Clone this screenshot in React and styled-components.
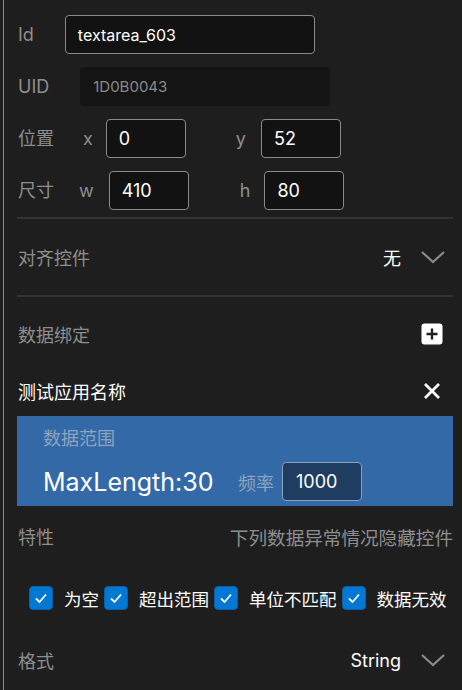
import styled, { createGlobalStyle } from "styled-components";

const GlobalStyle = createGlobalStyle`
  html, body {
    margin: 0;
    padding: 0;
    background: #1e1e1e;
  }
  body {
    font-family: "Inter", "Noto Sans CJK SC", sans-serif;
  }
`;

const Panel = styled.div`
  position: relative;
  width: 459px;
  height: 690px;
  box-sizing: border-box;
  margin-left: 3px;
  padding: 15px 9px 0 13px;
  background: #1e1e1e;
  border-left: 1px solid #8a8a8a;
  overflow: hidden;
`;

const FieldRow = styled.div`
  display: flex;
  align-items: center;
  height: 39px;
  margin-bottom: 13px;
`;

const Label = styled.span`
  color: #8e8e8e;
  font-size: 18px;
  line-height: 24px;
  margin-left: 1px;
  margin-right: ${(p) => p.$gap || 0}px;
`;

const Axis = styled.span`
  color: #8e8e8e;
  font-size: 18px;
  margin-left: ${(p) => p.$left || 0}px;
  margin-right: ${(p) => p.$right || 0}px;
`;

const TextBox = styled.div`
  box-sizing: border-box;
  width: ${(p) => p.$width}px;
  height: 39px;
  display: flex;
  align-items: center;
  padding-left: 12px;
  border-radius: 4px;
  border: 1px solid ${(p) => (p.$readOnly ? "transparent" : "#8a8a8a")};
  background: ${(p) => (p.$readOnly ? "#141414" : "#121212")};
  color: ${(p) => (p.$readOnly ? "#8a8a8a" : "#ffffff")};
  font-size: ${(p) => p.$size || 18}px;
`;

const Divider = styled.div`
  height: 2px;
  background: #333333;
  margin-top: ${(p) => p.$top || 0}px;
`;

const SectionRow = styled.div`
  display: flex;
  align-items: center;
  justify-content: space-between;
  height: ${(p) => p.$height}px;
`;

const SectionTitle = styled.span`
  color: ${(p) => (p.$bright ? "#ffffff" : "#8e8e8e")};
  font-size: 18px;
  margin-left: 1px;
`;

const RightGroup = styled.div`
  display: flex;
  align-items: center;
  gap: 19px;
  color: #ffffff;
  font-size: 18px;
`;

const Hint = styled.span`
  color: #8e8e8e;
  font-size: 18.6px;
`;

const IconSlot = styled.div`
  display: flex;
  align-items: center;
  justify-content: center;
  width: 26px;
  margin-right: ${(p) => p.$right || 0}px;
`;

const BindPanel = styled.div`
  background: #3469a8;
  margin-top: 5px;
  height: 90px;
  box-sizing: border-box;
  padding: 11px 0 0 26px;
`;

const BindLabel = styled.div`
  color: #8ea3bd;
  font-size: 18px;
  line-height: 24px;
`;

const BindRow = styled.div`
  display: flex;
  align-items: center;
  margin-top: 11px;
  height: 39px;
`;

const BigValue = styled.span`
  color: #ffffff;
  font-size: 25px;
  width: 195px;
`;

const FreqLabel = styled.span`
  color: #8ea3bd;
  font-size: 18px;
  margin-right: 8px;
`;

const FreqBox = styled.div`
  box-sizing: border-box;
  width: 80px;
  height: 39px;
  display: flex;
  align-items: center;
  padding-left: 13px;
  border-radius: 4px;
  background: #1f3c61;
  border: 1px solid #8aa0bb;
  color: #ffffff;
  font-size: 18px;
`;

const CheckRow = styled.div`
  display: flex;
  align-items: center;
  height: 64px;
  padding-left: 12px;
`;

const CheckItem = styled.label`
  display: flex;
  align-items: center;
  flex-shrink: 0;
  white-space: nowrap;
  color: #ffffff;
  font-size: 17.5px;
  margin-right: 5px;
`;

const Box = styled.span`
  box-sizing: border-box;
  width: 24px;
  height: 24px;
  border-radius: 4px;
  background: #0078d4;
  border: 1px solid #0a5fa6;
  display: flex;
  align-items: center;
  justify-content: center;
  margin-right: 11px;
`;

const Chevron = () => (
  <svg width="26" height="16" viewBox="0 0 26 16">
    <path d="M2 3 L13 13 L24 3" fill="none" stroke="#8a8a8a" strokeWidth="2.2" />
  </svg>
);

const PlusBox = () => (
  <svg width="22" height="22" viewBox="0 0 22 22">
    <rect x="0.5" y="0.5" width="21" height="21" rx="3" fill="#ffffff" />
    <path d="M11 5.5 V16.5 M5.5 11 H16.5" stroke="#1e1e1e" strokeWidth="2.4" />
  </svg>
);

const CloseIcon = () => (
  <svg width="18" height="18" viewBox="0 0 18 18">
    <path d="M2 2 L16 16 M16 2 L2 16" stroke="#ffffff" strokeWidth="2.8" />
  </svg>
);

const Check = () => (
  <svg width="16" height="16" viewBox="0 0 16 16">
    <path d="M3 8.5 L6.5 12 L13 4.5" fill="none" stroke="#ffffff" strokeWidth="1.8" />
  </svg>
);

const flags = ["为空", "超出范围", "单位不匹配", "数据无效"];

export default function App() {
  return (
    <Panel>
      <GlobalStyle />
      <FieldRow>
        <Label $gap={31}>Id</Label>
        <TextBox $width={250} $size={16}>textarea_603</TextBox>
      </FieldRow>
      <FieldRow>
        <Label $gap={31}>UID</Label>
        <TextBox $width={250} $size={15} $readOnly>
          1D0B0043
        </TextBox>
      </FieldRow>
      <FieldRow>
        <Label>位置</Label>
        <Axis $left={29} $right={13}>x</Axis>
        <TextBox $width={80}>0</TextBox>
        <Axis $left={50} $right={15}>y</Axis>
        <TextBox $width={80}>52</TextBox>
      </FieldRow>
      <FieldRow>
        <Label>尺寸</Label>
        <Axis $left={25} $right={15}>w</Axis>
        <TextBox $width={80}>410</TextBox>
        <Axis $left={51} $right={14}>h</Axis>
        <TextBox $width={80}>80</TextBox>
      </FieldRow>
      <Divider $top={-6} />
      <SectionRow $height={76}>
        <SectionTitle>对齐控件</SectionTitle>
        <RightGroup>
          <span>无</span>
          <IconSlot $right={7}>
            <Chevron />
          </IconSlot>
        </RightGroup>
      </SectionRow>
      <Divider />
      <SectionRow $height={74}>
        <SectionTitle>数据绑定</SectionTitle>
        <IconSlot $right={8}>
          <PlusBox />
        </IconSlot>
      </SectionRow>
      <SectionRow $height={40}>
        <SectionTitle $bright>测试应用名称</SectionTitle>
        <IconSlot $right={8}>
          <CloseIcon />
        </IconSlot>
      </SectionRow>
      <BindPanel>
        <BindLabel>数据范围</BindLabel>
        <BindRow>
          <BigValue>MaxLength:30</BigValue>
          <FreqLabel>频率</FreqLabel>
          <FreqBox>1000</FreqBox>
        </BindRow>
      </BindPanel>
      <SectionRow $height={60}>
        <SectionTitle>特性</SectionTitle>
        <Hint>下列数据异常情况隐藏控件</Hint>
      </SectionRow>
      <CheckRow>
        {flags.map((f) => (
          <CheckItem key={f}>
            <Box>
              <Check />
            </Box>
            {f}
          </CheckItem>
        ))}
      </CheckRow>
      <SectionRow $height={60}>
        <SectionTitle>格式</SectionTitle>
        <RightGroup>
          <span>String</span>
          <IconSlot $right={7}>
            <Chevron />
          </IconSlot>
        </RightGroup>
      </SectionRow>
    </Panel>
  );
}
